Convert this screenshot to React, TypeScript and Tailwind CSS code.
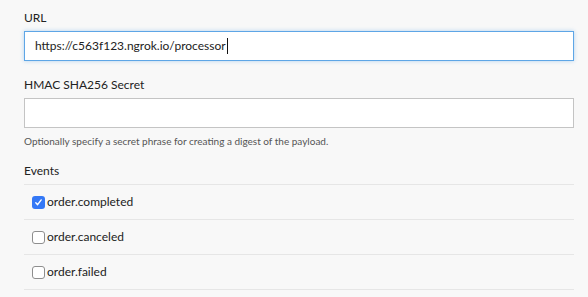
const events = [
  { name: "order.completed", checked: true },
  { name: "order.canceled", checked: false },
  { name: "order.failed", checked: false },
];

function Checkbox({ checked }: { checked: boolean }) {
  if (checked) {
    return (
      <span className="flex h-[13px] w-[13px] items-center justify-center rounded-[3px] bg-[#3478f6]">
        <svg width="9" height="9" viewBox="0 0 9 9" fill="none">
          <path d="M1.8 4.8 L3.6 6.7 L7.2 1.9" stroke="white" strokeWidth="1.4" strokeLinecap="round" strokeLinejoin="round" />
        </svg>
      </span>
    );
  }
  return <span className="h-[13px] w-[13px] rounded-[3px] border border-[#8e8e8e] bg-white" />;
}

export default function App() {
  return (
    <div className="min-h-[297px] w-[588px] bg-[#f8f8f8] font-['Lato','Liberation_Sans',sans-serif] text-[#222]">
      <div className="w-[574px] pl-[24px] pt-[9px]">
        <label className="block text-[12px] leading-[18px]">URL</label>
        <div className="mt-[4px] flex h-[30px] items-center border border-[#5ea6e6] bg-white px-[10px] text-[12px] shadow-[0_0_4px_rgba(94,166,230,0.45)]">
          <span>https://c563f123.ngrok.io/processor</span>
          <span className="ml-px h-[16px] w-px bg-[#111]" />
        </div>

        <label className="mt-[15px] block text-[12px] leading-[18px]">HMAC SHA256 Secret</label>
        <div className="mt-[4px] h-[30px] border border-[#c4c4c4] bg-white" />
        <p className="mt-[6px] text-[10px] leading-[14px] text-[#555]">
          Optionally specify a secret phrase for creating a digest of the payload.
        </p>

        <label className="mt-[14px] block text-[12px] leading-[18px]">Events</label>
        <div className="mt-[4px] border-b border-[#e6e6e6]">
          {events.map((e) => (
            <div key={e.name} className="flex h-[35px] items-center gap-[2px] border-t border-[#e6e6e6] pl-[8px]">
              <Checkbox checked={e.checked} />
              <span className="text-[12px]">{e.name}</span>
            </div>
          ))}
        </div>
      </div>
    </div>
  );
}
